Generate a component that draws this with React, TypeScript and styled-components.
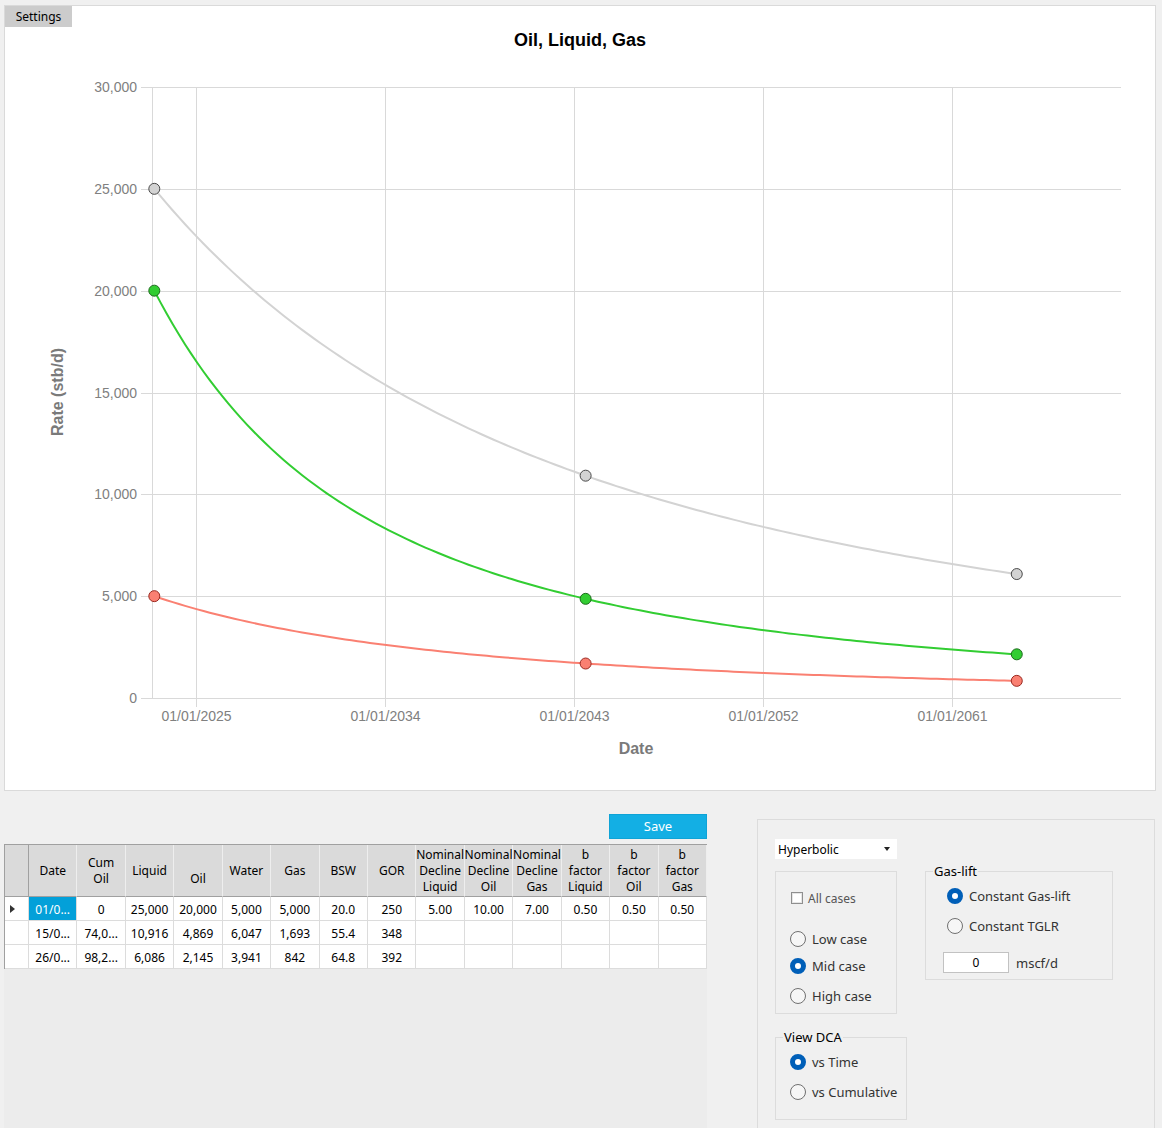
import React from "react"
import styled, { createGlobalStyle } from "styled-components"

const GlobalStyle = createGlobalStyle`
  html, body {
    margin: 0;
    padding: 0;
    background: #f0f0f0;
  }
  body {
    font-family: "Noto Sans", "Segoe UI", sans-serif;
    color: #000;
  }
`

const Page = styled.div`
  width: 1162px;
  height: 1128px;
  box-sizing: border-box;
  padding: 5px 0 0 4px;
  overflow: hidden;
`

/* ---------- chart ---------- */

const ChartPanel = styled.section`
  width: 1152px;
  height: 786px;
  box-sizing: border-box;
  border: 1px solid #dadada;
  background: #fff;
  display: flex;
  flex-direction: column;
`

const SettingsTab = styled.button`
  align-self: flex-start;
  width: 67px;
  height: 21px;
  margin: 0;
  padding: 0;
  border: none;
  background: #cccccc;
  color: #000;
  font: 12px "Noto Sans", sans-serif;
`

const ChartTitle = styled.h1`
  margin: 0;
  height: 26px;
  font: bold 18px "Liberation Sans", Arial, sans-serif;
  line-height: 27px;
  text-align: center;
`

const Plot = styled.svg`
  display: block;
`

const TickLabel = styled.text`
  font-family: "Liberation Sans", Arial, sans-serif;
  font-size: 14px;
  fill: #808080;
`

const AxisTitle = styled.text`
  font-family: "Liberation Sans", Arial, sans-serif;
  font-size: 16px;
  font-weight: bold;
  fill: #7a7a7a;
`

const PLOT = { left: 153, right: 1121, top: 87, bottom: 698 }
const Y_MAX = 30000
const X_START = 154.3
const PX_PER_YEAR = 21
const B = 0.5
const T_POINTS = [0, 20.54, 41.07]

const yOf = (q: number) => PLOT.bottom - (q / Y_MAX) * (PLOT.bottom - PLOT.top)
const xOf = (t: number) => X_START + t * PX_PER_YEAR
const rate = (qi: number, d: number, t: number) => qi / Math.pow(1 + B * d * t, 1 / B)

const curvePath = (qi: number, d: number) => {
  const steps = 140
  let p = ""
  for (let i = 0; i <= steps; i++) {
    const t = (T_POINTS[2] * i) / steps
    p += `${i ? "L" : "M"}${xOf(t).toFixed(2)} ${yOf(rate(qi, d, t)).toFixed(2)} `
  }
  return p
}

const series = [
  { name: "Liquid", qi: 25000, d: 0.05, line: "#d3d3d3", edge: "#4a4a4a", values: [25000, 10916, 6086] },
  { name: "Oil", qi: 20000, d: 0.1, line: "#32cd32", edge: "#1d6b1d", values: [20000, 4869, 2145] },
  { name: "Gas", qi: 5000, d: 0.07, line: "#fa8072", edge: "#9b2a22", values: [5000, 1693, 842] },
]

const yTicks = [0, 5000, 10000, 15000, 20000, 25000, 30000]
const xTicks = ["01/01/2025", "01/01/2034", "01/01/2043", "01/01/2052", "01/01/2061"]

const RateChart: React.FC = () => (
  <Plot width={1150} height={737} viewBox="5 53 1150 737">
    {yTicks.map((v) => {
      const y = Math.round(yOf(v)) + 0.5
      return (
        <g key={v}>
          <line x1={141} x2={PLOT.right} y1={y} y2={y} stroke="#d9d9d9" />
          <TickLabel x={137} y={y + 1} textAnchor="end" dominantBaseline="middle">
            {v.toLocaleString("en-US")}
          </TickLabel>
        </g>
      )
    })}
    <line x1={PLOT.left - 0.5} x2={PLOT.left - 0.5} y1={PLOT.top} y2={PLOT.bottom} stroke="#d9d9d9" />
    {xTicks.map((label, i) => {
      const x = Math.round(196.3 + 189 * i) + 0.5
      return (
        <g key={label}>
          <line x1={x} x2={x} y1={PLOT.top} y2={707} stroke="#d9d9d9" />
          <TickLabel x={x} y={717} textAnchor="middle" dominantBaseline="middle">
            {label}
          </TickLabel>
        </g>
      )
    })}
    <AxisTitle x={636} y={750} textAnchor="middle" dominantBaseline="middle">
      Date
    </AxisTitle>
    <AxisTitle
      x={59}
      y={392}
      textAnchor="middle"
      dominantBaseline="middle"
      transform="rotate(-90 59 392)"
    >
      Rate (stb/d)
    </AxisTitle>
    {series.map((s) => (
      <path key={s.name} d={curvePath(s.qi, s.d)} fill="none" stroke={s.line} strokeWidth={2} />
    ))}
    {series.map((s) =>
      s.values.map((v, i) => (
        <circle
          key={`${s.name}-${i}`}
          cx={xOf(T_POINTS[i])}
          cy={yOf(v)}
          r={5.5}
          fill={s.line}
          stroke={s.edge}
          strokeWidth={1}
        />
      ))
    )}
  </Plot>
)

/* ---------- data grid ---------- */

const BottomRow = styled.div`
  display: flex;
  align-items: flex-start;
  height: 337px;
`

const GridColumn = styled.div`
  width: 703px;
  height: 100%;
  display: flex;
  flex-direction: column;
`

const SaveButton = styled.button`
  align-self: flex-end;
  width: 98px;
  height: 25px;
  margin: 23px 0 0 0;
  padding: 0 0 1px 0;
  border: 1px solid #0fa3d6;
  background: #13afe4;
  color: #fff;
  font: 13px "Noto Sans", sans-serif;
`

const GridArea = styled.div`
  flex: 1;
  margin-top: 5px;
  background: #ececec;
`

const Grid = styled.div`
  display: grid;
  grid-template-columns: 24px repeat(14, 1fr);
  width: 703px;
  box-sizing: border-box;
  border-top: 1px solid #a0a0a0;
  border-left: 1px solid #a0a0a0;
  font-size: 12px;
`

const HeadCell = styled.div<{ $corner?: boolean }>`
  height: 52px;
  box-sizing: border-box;
  padding: 1px 0 0 0;
  background: #dadada;
  border-bottom: 1px solid #a0a0a0;
  border-right: 1px solid ${({ $corner }) => ($corner ? "#a0a0a0" : "#eeeeee")};
  display: flex;
  flex-direction: column;
  justify-content: center;
  overflow: hidden;
`

const HeadLine = styled.div`
  display: flex;
  justify-content: center;
  height: 16px;
  line-height: 16px;
  white-space: nowrap;
  overflow: hidden;
`

const Cell = styled.div<{ $selected?: boolean }>`
  height: 24px;
  box-sizing: border-box;
  border-right: 1px solid #dcdcdc;
  border-bottom: 1px solid #dcdcdc;
  background: ${({ $selected }) => ($selected ? "#03a0d9" : "#fff")};
  color: ${({ $selected }) => ($selected ? "#fff" : "#000")};
  line-height: 25px;
  text-align: center;
  white-space: nowrap;
  overflow: hidden;
`

const RowHead = styled(Cell)`
  display: flex;
  align-items: center;
  padding-left: 5px;
`

const CurrentRowMark = styled.span`
  width: 0;
  height: 0;
  border-left: 5px solid #333;
  border-top: 4px solid transparent;
  border-bottom: 4px solid transparent;
`

const headers: string[][] = [
  ["Date"],
  ["Cum", "Oil"],
  ["Liquid"],
  ["\u00a0", "Oil"],
  ["Water"],
  ["Gas"],
  ["BSW"],
  ["GOR"],
  ["Nominal", "Decline", "Liquid"],
  ["Nominal", "Decline", "Oil"],
  ["Nominal", "Decline", "Gas"],
  ["b", "factor", "Liquid"],
  ["b", "factor", "Oil"],
  ["b", "factor", "Gas"],
]

const rows: string[][] = [
  ["01/0...", "0", "25,000", "20,000", "5,000", "5,000", "20.0", "250", "5.00", "10.00", "7.00", "0.50", "0.50", "0.50"],
  ["15/0...", "74,0...", "10,916", "4,869", "6,047", "1,693", "55.4", "348", "", "", "", "", "", ""],
  ["26/0...", "98,2...", "6,086", "2,145", "3,941", "842", "64.8", "392", "", "", "", "", "", ""],
]

const DataGrid: React.FC = () => (
  <Grid>
    <HeadCell $corner />
    {headers.map((lines, i) => (
      <HeadCell key={i}>
        {lines.map((l, j) => (
          <HeadLine key={j}>{l}</HeadLine>
        ))}
      </HeadCell>
    ))}
    {rows.map((row, r) => (
      <React.Fragment key={r}>
        <RowHead>{r === 0 && <CurrentRowMark />}</RowHead>
        {row.map((v, c) => (
          <Cell key={c} $selected={r === 0 && c === 0}>
            {v}
          </Cell>
        ))}
      </React.Fragment>
    ))}
  </Grid>
)

/* ---------- options panel ---------- */

const SidePanel = styled.aside`
  margin: 28px 0 0 50px;
  width: 398px;
  height: 330px;
  box-sizing: border-box;
  border: 1px solid #dcdcdc;
  padding: 19px 0 0 17px;
  display: flex;
  gap: 18px;
`

const Stack = styled.div<{ $width: number; $top?: number }>`
  width: ${({ $width }) => $width}px;
  padding-top: ${({ $top }) => $top ?? 0}px;
  display: flex;
  flex-direction: column;
`

const Dropdown = styled.div`
  width: 122px;
  height: 20px;
  box-sizing: border-box;
  background: #fff;
  padding: 0 7px 0 3px;
  display: flex;
  align-items: center;
  justify-content: space-between;
  font-size: 12px;
`

const DropArrow = styled.span`
  width: 0;
  height: 0;
  border-top: 4px solid #222;
  border-left: 3.5px solid transparent;
  border-right: 3.5px solid transparent;
`

const Box = styled.div`
  margin-top: 12px;
  width: 122px;
  height: 143px;
  box-sizing: border-box;
  border: 1px solid #dcdcdc;
  display: flex;
  flex-direction: column;
`

const Group = styled.fieldset<{ $width: number; $height: number; $top?: number }>`
  margin: ${({ $top }) => $top ?? 0}px 0 0 0;
  padding: 0;
  min-width: 0;
  width: ${({ $width }) => $width}px;
  height: ${({ $height }) => $height}px;
  box-sizing: border-box;
  border: 1px solid #dcdcdc;
  display: flex;
  flex-direction: column;
`

const Legend = styled.legend`
  margin-left: 7px;
  padding: 0 1px;
  font-size: 13px;
  line-height: 18px;
  color: #000;
`

const Option = styled.label<{ $top: number; $left: number }>`
  margin: ${({ $top }) => $top}px 0 0 ${({ $left }) => $left}px;
  height: 24px;
  display: flex;
  align-items: center;
  gap: 6px;
  font-size: 13px;
  color: #333;
  white-space: nowrap;
`

const Radio = styled.span<{ $checked?: boolean }>`
  width: 16px;
  height: 16px;
  box-sizing: border-box;
  border-radius: 50%;
  flex: none;
  background: ${({ $checked }) => ($checked ? "#fff" : "#f6f6f6")};
  border: ${({ $checked }) => ($checked ? "5px solid #005fb8" : "1px solid #707070")};
`

const CheckRow = styled.label`
  margin: 16px 0 0 15px;
  height: 20px;
  display: flex;
  align-items: center;
  gap: 5px;
  font-size: 12px;
  color: #555;
`

const CheckBox = styled.span`
  width: 12px;
  height: 12px;
  box-sizing: border-box;
  border: 1px solid #8f8f8f;
  background: #fff;
  box-shadow: inset 0 0 0 1px #e6e6e6;
`

const InputRow = styled.div`
  margin: 14px 0 0 17px;
  height: 21px;
  display: flex;
  align-items: center;
  gap: 7px;
  font-size: 13px;
  color: #333;
`

const NumberInput = styled.div`
  width: 66px;
  height: 21px;
  box-sizing: border-box;
  border: 1px solid #c2c2c2;
  background: #fff;
  font-size: 12px;
  line-height: 19px;
  text-align: center;
  color: #000;
`

const OptionsPanel: React.FC = () => (
  <SidePanel>
    <Stack $width={132}>
      <Dropdown>
        Hyperbolic
        <DropArrow />
      </Dropdown>
      <Box>
        <CheckRow>
          <CheckBox />
          All cases
        </CheckRow>
        <Option $top={19} $left={14}>
          <Radio />
          Low case
        </Option>
        <Option $top={3} $left={14}>
          <Radio $checked />
          Mid case
        </Option>
        <Option $top={6} $left={14}>
          <Radio />
          High case
        </Option>
      </Box>
      <Group $width={132} $height={92} $top={14}>
        <Legend>View DCA</Legend>
        <Option $top={4} $left={14}>
          <Radio $checked />
          vs Time
        </Option>
        <Option $top={6} $left={14}>
          <Radio />
          vs Cumulative
        </Option>
      </Group>
    </Stack>
    <Stack $width={188} $top={23}>
      <Group $width={188} $height={118}>
        <Legend>Gas-lift</Legend>
        <Option $top={4} $left={21}>
          <Radio $checked />
          Constant Gas-lift
        </Option>
        <Option $top={6} $left={21}>
          <Radio />
          Constant TGLR
        </Option>
        <InputRow>
          <NumberInput>0</NumberInput>
          mscf/d
        </InputRow>
      </Group>
    </Stack>
  </SidePanel>
)

const App: React.FC = () => (
  <Page>
    <GlobalStyle />
    <ChartPanel>
      <SettingsTab>Settings</SettingsTab>
      <ChartTitle>Oil, Liquid, Gas</ChartTitle>
      <RateChart />
    </ChartPanel>
    <BottomRow>
      <GridColumn>
        <SaveButton>Save</SaveButton>
        <GridArea>
          <DataGrid />
        </GridArea>
      </GridColumn>
      <OptionsPanel />
    </BottomRow>
  </Page>
)

export default App
